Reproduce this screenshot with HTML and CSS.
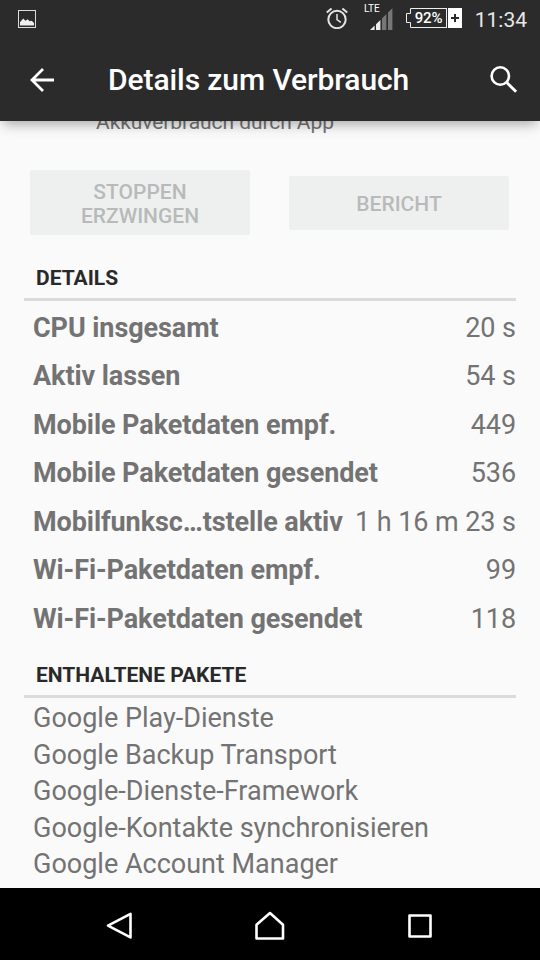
FILE: index.html
```html
<!DOCTYPE html>
<html lang="de">
<head>
<meta charset="utf-8">
<title>Details zum Verbrauch</title>
<link rel="stylesheet" href="styles.css">
</head>
<body>
<div class="screen">
  <header class="header">
    <div class="status">
      <svg class="picture" width="18" height="18" viewBox="0 0 18 18">
        <rect x=".5" y=".5" width="17" height="17" fill="none" stroke="#ddd"/>
        <path d="M2 15.5v-3.2L5.2 8.5l2.3 2.2 2.2-1.4 2 2 2-.6 2.3 2.2v2.6z" fill="#eee"/>
      </svg>
      <svg class="alarm" width="22" height="22" viewBox="0 0 22 22" fill="none" stroke="#e4e4e4">
        <circle cx="11" cy="12.5" r="8.7" stroke-width="2"/>
        <path d="M11 7v5.5l3.8 2.8" stroke-width="1.5"/>
        <path d="M.8 5.6L5.6 1.6M21.2 5.6l-4.8-4" stroke-width="2"/>
      </svg>
      <div class="signal">
        <span class="lte">LTE</span>
        <svg width="23" height="22" viewBox="0 0 23 22">
          <path d="M0 22l4.6-4.5V22zM6 16.2l4.4-4.3V22H6z" fill="#eee"/>
          <path d="M12 10.4l4.4-4.3V22H12zM18 4.6L22.4.3V22H18z" fill="#777"/>
        </svg>
      </div>
      <div class="battery">
        <svg width="41" height="20" viewBox="0 0 41 20" fill="none" stroke="#eee">
          <path d="M40.5.5h-36v5h-4v9h4v5h36"/>
          <path d="M40.5 0v20"/>
        </svg>
        <span class="level">92%</span>
        <svg width="14" height="20" viewBox="0 0 14 20">
          <path d="M0 0h14v20H0z" fill="#fff"/>
          <path d="M3 10h8M7 6v8" stroke="#2b2b2b" stroke-width="2"/>
        </svg>
      </div>
      <span class="clock">11:34</span>
    </div>
    <div class="appbar">
      <svg class="back" width="24" height="24" viewBox="0 0 24 24" fill="none" stroke="#fff" stroke-width="2.8">
        <path d="M13 1L2 12l11 11M2 12h22"/>
      </svg>
      <h1 class="title">Details zum Verbrauch</h1>
      <svg class="search" width="28" height="28" viewBox="0 0 28 28" fill="none" stroke="#fff">
        <circle cx="10.3" cy="10" r="8.7" stroke-width="2.6"/>
        <path d="M16.5 16.3l9.6 9.4" stroke-width="3"/>
      </svg>
    </div>
  </header>
  <main class="content">
    <p class="summary">Akkuverbrauch durch App</p>
    <div class="actions">
      <button class="button" disabled>STOPPEN<br>ERZWINGEN</button>
      <button class="button" disabled>BERICHT</button>
    </div>
    <h2 class="section">DETAILS</h2>
    <dl class="details">
      <div class="row"><dt>CPU insgesamt</dt><dd>20 s</dd></div>
      <div class="row"><dt>Aktiv lassen</dt><dd>54 s</dd></div>
      <div class="row"><dt>Mobile Paketdaten empf.</dt><dd>449</dd></div>
      <div class="row"><dt>Mobile Paketdaten gesendet</dt><dd>536</dd></div>
      <div class="row"><dt>Mobilfunksc…tstelle aktiv</dt><dd>1 h 16 m 23 s</dd></div>
      <div class="row"><dt>Wi-Fi-Paketdaten empf.</dt><dd>99</dd></div>
      <div class="row"><dt>Wi-Fi-Paketdaten gesendet</dt><dd>118</dd></div>
    </dl>
    <h2 class="section">ENTHALTENE PAKETE</h2>
    <ul class="packages">
      <li>Google Play-Dienste</li>
      <li>Google Backup Transport</li>
      <li>Google-Dienste-Framework</li>
      <li>Google-Kontakte synchronisieren</li>
      <li>Google Account Manager</li>
    </ul>
  </main>
  <nav class="navbar">
    <svg width="30" height="30" viewBox="0 0 30 30"><path d="M25.5 2.8v23.6L3 14.6z"/></svg>
    <svg width="30" height="30" viewBox="0 0 30 30"><path d="M1.5 13.7L15 2l13 11.7v13.8h-26.5z"/></svg>
    <svg width="30" height="30" viewBox="0 0 30 30"><path d="M4.5 4.5h21v21h-21z"/></svg>
  </nav>
</div>
</body>
</html>
```

FILE: styles.css
```css
* { box-sizing: border-box; margin: 0; padding: 0; }

body {
  font-family: Roboto, "Liberation Sans", sans-serif;
  background: #fafafa;
}

svg { display: block; flex: none; }

.screen {
  display: flex;
  flex-direction: column;
  width: 540px;
  height: 960px;
  overflow: hidden;
}

.header {
  position: relative;
  z-index: 1;
  flex: none;
  height: 121px;
  background: #2b2b2b;
  color: #fff;
  box-shadow: 0 6px 12px -3px rgba(0, 0, 0, .34);
}

.status {
  display: flex;
  align-items: flex-start;
  height: 38px;
  padding: 0 13px 0 18px;
}

.picture { margin-top: 10px; }

.alarm { margin: 7px 0 0 290px; }

.signal {
  position: relative;
  width: 29px;
  margin: 8px 0 0 16px;
  padding-left: 6px;
}

.lte {
  position: absolute;
  left: 0;
  top: -5px;
  font-size: 10px;
  line-height: 12px;
}

.battery {
  position: relative;
  display: flex;
  gap: 1px;
  margin: 8px 0 0 13px;
}

.level {
  position: absolute;
  left: 5px;
  top: 0;
  width: 35px;
  text-align: center;
  font-size: 15px;
  font-weight: 500;
  letter-spacing: -.2px;
  line-height: 20px;
}

.clock {
  margin: 8px 0 0 auto;
  font-size: 21px;
  line-height: 25px;
  color: #e8e8e8;
}

.appbar {
  display: flex;
  align-items: center;
  height: 83px;
  padding: 0 22px 0 30px;
}

.title {
  flex: 1;
  margin-left: 54px;
  padding-top: 1px;
  font-size: 30px;
  font-weight: 500;
  letter-spacing: -.08px;
  line-height: 36px;
}

.content {
  flex: 1;
  min-height: 0;
  overflow: hidden;
  padding: 0 24px;
  color: #737373;
}

.summary {
  margin: -11px 0 0 72px;
  font-size: 21px;
  letter-spacing: -.07px;
  line-height: 24px;
}

.actions {
  display: flex;
  align-items: center;
  justify-content: space-between;
  margin-top: 36px;
  padding: 0 7px 0 6px;
}

.button {
  width: 220px;
  padding: 10px 0 7px;
  min-height: 54px;
  border: 0;
  border-radius: 2px;
  background: #eef0ef;
  color: #b8baba;
  font: 500 21px/24px Roboto, "Liberation Sans", sans-serif;
}

.section {
  height: 66px;
  padding: 30px 12px 0;
  border-bottom: 3px solid #dadbdb;
  font-size: 21px;
  font-weight: 700;
  line-height: 26px;
  color: #292929;
}

.details {
  height: 331px;
  padding-top: 2.5px;
  font-size: 27px;
  line-height: 48.5px;
}

.row {
  display: flex;
  justify-content: space-between;
  height: 48.5px;
  padding-left: 9px;
  white-space: nowrap;
}

.row dt {
  font-weight: 700;
  letter-spacing: -.08px;
}

.row dd { letter-spacing: -.06px; }

.packages {
  padding: 2px 9px 0;
  list-style: none;
  font-size: 27px;
  line-height: 36.5px;
}

.navbar {
  display: flex;
  flex: none;
  align-items: center;
  justify-content: space-between;
  height: 72px;
  padding: 4px 105px 0;
  background: #000;
}

.navbar path {
  fill: none;
  stroke: #fff;
  stroke-width: 2.6;
  stroke-linejoin: round;
}
```
